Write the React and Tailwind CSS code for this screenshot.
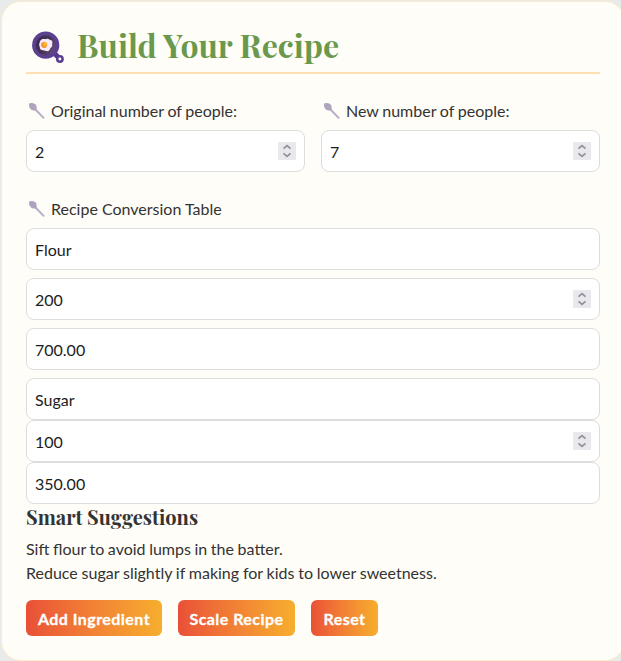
import React from "react";

function PanIcon() {
  return (
    <svg className="block h-8 w-8 shrink-0" viewBox="0 0 32 32" aria-hidden="true">
      <defs>
        <linearGradient id="panInside" x1="0" y1="0" x2="1" y2="0.5">
          <stop offset="0" stopColor="#3a2758" />
          <stop offset="0.6" stopColor="#46344f" />
          <stop offset="1" stopColor="#5f4878" />
        </linearGradient>
        <radialGradient id="yolk" cx="0.65" cy="0.35" r="0.7">
          <stop offset="0" stopColor="#ffc33d" />
          <stop offset="1" stopColor="#ee8624" />
        </radialGradient>
      </defs>
      <path d="M21.5 21.5 L26 26" stroke="#54398a" strokeWidth="5" strokeLinecap="round" />
      <circle cx="27.9" cy="28" r="2.7" fill="#fffdf7" stroke="#5a3f91" strokeWidth="2.5" />
      <circle cx="13.7" cy="14.2" r="13.6" fill="#5b4091" />
      <circle cx="13.7" cy="14.2" r="9.9" fill="url(#panInside)" />
      <path
        d="M8 10.5 C9 7.5 12 8 14 8.2 C16.5 7 17.5 9 19 9.3 C21.5 10 19.8 12.5 20.3 14 C20.5 16 18.5 16.6 18 18 C17 21 14.5 20.3 12.5 19.5 C10 19.5 7.6 18.8 7.8 16 C6.7 14 7.2 12.5 8 10.5 Z"
        fill="#f7e9f8"
      />
      <circle cx="12.2" cy="13.8" r="3.1" fill="url(#yolk)" />
    </svg>
  );
}

function SpoonIcon() {
  return (
    <svg className="block h-4 w-4 shrink-0" viewBox="0 0 16 16" aria-hidden="true">
      <path d="M5.5 5.5 L14.6 14.8" stroke="#b9abc9" strokeWidth="1.9" strokeLinecap="round" />
      <path
        d="M0.3 0.5 C2 -0.5 5 -0.1 6.6 1.6 C7.8 3 8 5.4 7.3 7.2 C5.3 7.7 3 7.3 1.5 5.9 C0 4.4 -0.5 2 0.3 0.5 Z"
        fill="#afa4bf"
      />
    </svg>
  );
}

function Spinner() {
  return (
    <span className="flex h-[18px] w-[18px] shrink-0 items-center justify-center bg-[#e9e8ed]">
      <svg className="h-[18px] w-[18px]" viewBox="0 0 18 18" fill="none" stroke="#9190a0" strokeWidth="1.7">
        <path d="M5.5 6.7 L9 3.6 L12.5 6.7" />
        <path d="M5.5 11.3 L9 14.4 L12.5 11.3" />
      </svg>
    </span>
  );
}

function Field({ value, number = false }) {
  return (
    <div className="flex h-[42px] w-full items-center rounded-lg border border-[#dddddd] bg-white px-2">
      <input
        className="h-6 min-w-0 flex-1 translate-y-px bg-transparent text-base text-[#1c1c1c] outline-none"
        defaultValue={value}
      />
      {number && <Spinner />}
    </div>
  );
}

function Label({ children }) {
  return (
    <div className="flex h-6 items-center gap-1.5 pl-[3px]">
      <SpoonIcon />
      <span className="leading-6">{children}</span>
    </div>
  );
}

function Button({ width, children }) {
  return (
    <button
      className={`${width} h-9 whitespace-nowrap rounded-md bg-linear-to-r from-[#e94f37] to-[#f6ae2d] pt-0.5 text-base font-bold tracking-[0.45px] text-white [-webkit-text-stroke:0.3px_white]`}
    >
      {children}
    </button>
  );
}

export default function App() {
  return (
    <div className="h-[661px] w-[621px] overflow-hidden bg-[#e9ebeb] pl-px pt-px font-['Lato',sans-serif] text-base text-[#333333]">
      <main className="h-[660px] w-[624px] rounded-[20px] border border-[#ffebcc] bg-[#fffdf7] px-6 pt-6">
        <header className="flex h-12 items-start gap-[13px] border-b-2 border-[#ffe0b2] pl-[6px]">
          <div className="pt-[5px]">
            <PanIcon />
          </div>
          <h1 className="whitespace-nowrap font-['Playfair_Display','Liberation_Serif',serif] text-[32px] font-bold leading-[38px] text-[#6a994e]">
            Build Your Recipe
          </h1>
        </header>

        <section className="mt-[25px] grid grid-cols-2 gap-4 [word-spacing:-0.4px]">
          <div className="flex flex-col gap-[7px]">
            <Label>Original number of people:</Label>
            <Field value="2" number />
          </div>
          <div className="flex flex-col gap-[7px]">
            <Label>New number of people:</Label>
            <Field value="7" number />
          </div>
        </section>

        <section className="mt-[25px]">
          <Label>Recipe Conversion Table</Label>
          <div className="mt-[7px] flex flex-col gap-2">
            <Field value="Flour" />
            <Field value="200" number />
            <Field value="700.00" />
            <div className="flex flex-col">
              <Field value="Sugar" />
              <Field value="100" number />
              <Field value="350.00" />
            </div>
          </div>
        </section>

        <section>
          <h2 className="h-[33px] whitespace-nowrap font-['Playfair_Display','Liberation_Serif',serif] text-[20px] font-bold leading-[25px] text-[#333333]">
            Smart Suggestions
          </h2>
          <p className="leading-6 [word-spacing:-0.5px]">Sift flour to avoid lumps in the batter.</p>
          <p className="leading-6 [word-spacing:-0.3px]">
            Reduce sugar slightly if making for kids to lower sweetness.
          </p>
        </section>

        <div className="mt-[15px] flex gap-4">
          <Button width="w-[136px]">Add Ingredient</Button>
          <Button width="w-[117px]">Scale Recipe</Button>
          <Button width="w-[67px]">Reset</Button>
        </div>
      </main>
    </div>
  );
}
